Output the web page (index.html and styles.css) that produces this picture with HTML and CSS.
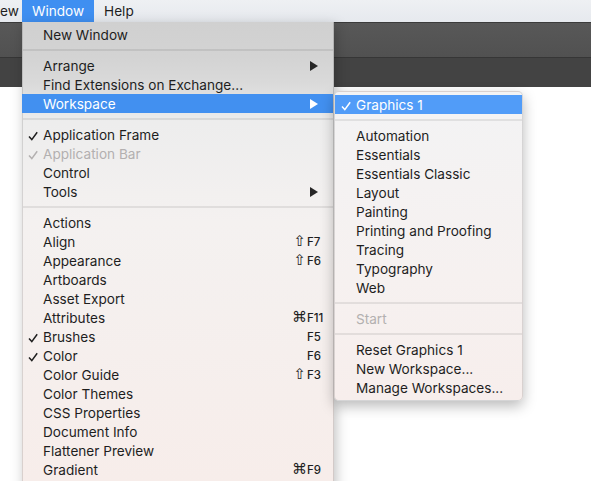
FILE: index.html
```html
<html lang="en"><head>
    <meta charset="UTF-8">
    <title>Window menu</title>
    <link rel="stylesheet" href="styles.css">
</head>
<body>
    <div class="menubar">
        <span class="mb-item clipped">ew</span>
        <span class="mb-item active">Window</span>
        <span class="mb-item">Help</span>
    </div>
    <div class="app">
        <div class="control-bar"></div>
        <div class="tab-bar"></div>
        <div class="canvas"></div>
    </div>

    <div class="menu main-menu">
        <div class="item"><span class="check"></span><span class="label">New Window</span></div>
        <div class="sep"></div>
        <div class="item"><span class="check"></span><span class="label">Arrange</span><span class="arrow"></span></div>
        <div class="item"><span class="check"></span><span class="label">Find Extensions on Exchange...</span></div>
        <div class="item selected"><span class="check"></span><span class="label">Workspace</span><span class="arrow"></span></div>
        <div class="sep"></div>
        <div class="item"><span class="check"><svg viewBox="0 0 10 10"><path d="M1 5.6 L3.8 8.6 L9.2 1.2"/></svg></span><span class="label">Application Frame</span></div>
        <div class="item disabled"><span class="check"><svg viewBox="0 0 10 10"><path d="M1 5.6 L3.8 8.6 L9.2 1.2"/></svg></span><span class="label">Application Bar</span></div>
        <div class="item"><span class="check"></span><span class="label">Control</span></div>
        <div class="item"><span class="check"></span><span class="label">Tools</span><span class="arrow"></span></div>
        <div class="sep"></div>
        <div class="item"><span class="check"></span><span class="label">Actions</span></div>
        <div class="item"><span class="check"></span><span class="label">Align</span><span class="mod">⇧</span><span class="key">F7</span></div>
        <div class="item"><span class="check"></span><span class="label">Appearance</span><span class="mod">⇧</span><span class="key">F6</span></div>
        <div class="item"><span class="check"></span><span class="label">Artboards</span></div>
        <div class="item"><span class="check"></span><span class="label">Asset Export</span></div>
        <div class="item"><span class="check"></span><span class="label">Attributes</span><span class="mod">⌘</span><span class="key">F11</span></div>
        <div class="item"><span class="check"><svg viewBox="0 0 10 10"><path d="M1 5.6 L3.8 8.6 L9.2 1.2"/></svg></span><span class="label">Brushes</span><span class="mod"></span><span class="key">F5</span></div>
        <div class="item"><span class="check"><svg viewBox="0 0 10 10"><path d="M1 5.6 L3.8 8.6 L9.2 1.2"/></svg></span><span class="label">Color</span><span class="mod"></span><span class="key">F6</span></div>
        <div class="item"><span class="check"></span><span class="label">Color Guide</span><span class="mod">⇧</span><span class="key">F3</span></div>
        <div class="item"><span class="check"></span><span class="label">Color Themes</span></div>
        <div class="item"><span class="check"></span><span class="label">CSS Properties</span></div>
        <div class="item"><span class="check"></span><span class="label">Document Info</span></div>
        <div class="item"><span class="check"></span><span class="label">Flattener Preview</span></div>
        <div class="item"><span class="check"></span><span class="label">Gradient</span><span class="mod">⌘</span><span class="key">F9</span></div>
    </div>

    <div class="menu submenu">
        <div class="item selected"><span class="check"><svg viewBox="0 0 10 10"><path d="M1 5.6 L3.8 8.6 L9.2 1.2"/></svg></span><span class="label">Graphics 1</span></div>
        <div class="sep"></div>
        <div class="item"><span class="check"></span><span class="label">Automation</span></div>
        <div class="item"><span class="check"></span><span class="label">Essentials</span></div>
        <div class="item"><span class="check"></span><span class="label">Essentials Classic</span></div>
        <div class="item"><span class="check"></span><span class="label">Layout</span></div>
        <div class="item"><span class="check"></span><span class="label">Painting</span></div>
        <div class="item"><span class="check"></span><span class="label">Printing and Proofing</span></div>
        <div class="item"><span class="check"></span><span class="label">Tracing</span></div>
        <div class="item"><span class="check"></span><span class="label">Typography</span></div>
        <div class="item"><span class="check"></span><span class="label">Web</span></div>
        <div class="sep"></div>
        <div class="item disabled"><span class="check"></span><span class="label">Start</span></div>
        <div class="sep"></div>
        <div class="item"><span class="check"></span><span class="label">Reset Graphics 1</span></div>
        <div class="item"><span class="check"></span><span class="label">New Workspace...</span></div>
        <div class="item"><span class="check"></span><span class="label">Manage Workspaces...</span></div>
    </div>
</body></html>
```

FILE: styles.css
```css
body {
    margin: 0;
    width: 591px;
    height: 481px;
    overflow: hidden;
    position: relative;
    font-family: Inter, "Noto Sans", "DejaVu Sans", sans-serif;
    font-size: 13.6px;
    color: #1e1e1e;
    background-color: #fff;
}
.menubar {
    height: 22px;
    display: flex;
    align-items: stretch;
    background: linear-gradient(#eef0f3, #e6e9ee);
    overflow: hidden;
}
.mb-item {
    padding: 0 10px;
    line-height: 22px;
    color: #1e1e1e;
}
.mb-item.clipped {
    width: 13px;
    padding: 0 9px 0 0;
    overflow: hidden;
}
.mb-item.active {
    background-color: #3f8ff1;
    color: #fff;
}
.app {
    display: flex;
    flex-direction: column;
}
.control-bar {
    height: 34px;
    border-top: 1px solid #3b3b3b;
    background: linear-gradient(#585858, #515151);
}
.tab-bar {
    height: 29px;
    border-top: 1px solid #363636;
    background-color: #434343;
}
.canvas {
    height: 400px;
    background-color: #fff;
}

.menu {
    position: absolute;
    box-sizing: border-box;
    padding: 3px 0;
}
.main-menu {
    left: 22px;
    top: 22px;
    width: 312px;
    height: 520px;
    border-left: 1px solid rgba(0, 0, 0, 0.12);
    border-right: 1px solid rgba(0, 0, 0, 0.14);
    background: linear-gradient(#d0d0d0 0px, #d3d3d3 35px, #dadada 62px, #ededed 100px, #f4f1f0 200px, #f7edea 459px);
    box-shadow: 2px 4px 12px rgba(0, 0, 0, 0.25);
}
.submenu {
    left: 334px;
    top: 91px;
    width: 189px;
    border: 1px solid rgba(0, 0, 0, 0.12);
    border-radius: 5px;
    background: linear-gradient(#f3f3f4, #f6f1f0 60%, #f7eeec);
    box-shadow: 0 5px 14px rgba(0, 0, 0, 0.28);
}
.item {
    height: 19px;
    display: flex;
    align-items: center;
    white-space: nowrap;
}
.main-menu .item {
    margin-left: -1px;
}
.check {
    width: 21px;
    height: 19px;
    flex: none;
    box-sizing: border-box;
    padding: 6px 0 0 6px;
}
.check svg {
    display: block;
    width: 10px;
    height: 10px;
    fill: none;
    stroke: currentColor;
    stroke-width: 1.5;
}
.label {
    flex: 1;
}
.arrow {
    width: 0;
    height: 0;
    margin-right: 15px;
    border-top: 5px solid transparent;
    border-bottom: 5px solid transparent;
    border-left: 8px solid #262626;
}
.mod {
    width: 14px;
    text-align: right;
    padding-right: 1px;
    font-family: "DejaVu Sans", sans-serif;
    font-size: 15px;
    line-height: 19px;
}
.key {
    width: 18px;
    margin-right: 8px;
    font-size: 11.5px;
    font-weight: 500;
}
.item.selected {
    background-color: #4290f0;
    color: #fff;
}
.submenu .item.selected {
    background-color: #519cf8;
}
.item.selected .arrow {
    border-left-color: #fff;
}
.item.disabled {
    color: #b3b0b0;
}
.sep {
    height: 2px;
    margin: 5px 0;
    background-color: rgba(0, 0, 0, 0.08);
}
```
